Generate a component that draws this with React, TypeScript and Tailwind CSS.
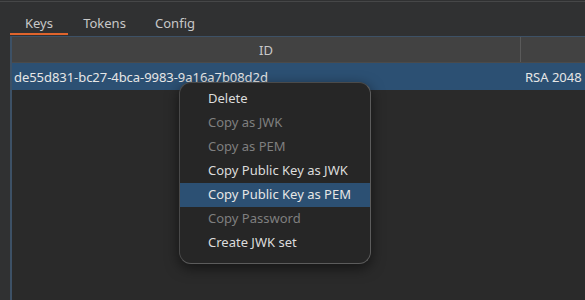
const items = [
  { label: "Delete", disabled: false },
  { label: "Copy as JWK", disabled: true },
  { label: "Copy as PEM", disabled: true },
  { label: "Copy Public Key as JWK", disabled: false },
  { label: "Copy Public Key as PEM", disabled: false, active: true },
  { label: "Copy Password", disabled: true },
  { label: "Create JWK set", disabled: false },
]

export default function App() {
  return (
    <div
      className="relative h-[300px] w-[585px] overflow-hidden bg-[#303132] text-[13px] text-[#dcdcdc]"
      style={{ fontFamily: '"Noto Sans", sans-serif' }}
    >
      <div className="mt-px h-px bg-[#464748]" />
      <div className="flex h-[33px] items-end pl-[10px]">
        <div className="flex h-[24px] w-[58px] items-center justify-center border-b-2 border-[#e0642c] pt-[3px] text-[#c8c8c8]">
          Keys
        </div>
        <div className="flex h-[24px] w-[73px] items-center justify-center border-b-2 border-transparent pt-[3px] text-[#c8c8c8]">
          Tokens
        </div>
        <div className="flex h-[24px] w-[68px] items-center justify-center border-b-2 border-transparent pt-[3px] text-[#c8c8c8]">
          Config
        </div>
      </div>
      <div className="ml-[10px] mt-px h-[264px] border-l-2 border-t border-[#3d5166] bg-[#2a2a2a]">
        <div className="flex h-[26px] border-b border-[#4a4a4a] bg-[#424242] text-[#c8c8c8]">
          <div className="flex w-[509px] items-center justify-center border-r border-[#5a5a5a] pt-[2px]">ID</div>
          <div className="flex-1" />
        </div>
        <div className="flex h-[27px] items-center bg-[#2c5073] pt-[2px] text-[#e6e6e6]">
          <div className="w-[509px] pl-[2px] tracking-[-0.05px]">de55d831-bc27-4bca-9983-9a16a7b08d2d</div>
          <div className="pl-[4px]">RSA 2048</div>
        </div>
      </div>

      <div className="absolute left-[179px] top-[82px] w-[192px] rounded-[12px] border border-[#4a4a4a] border-b-[#5c5c5c] border-r-[#5c5c5c] bg-[#262626] pb-2 pt-1 shadow-[0_4px_14px_rgba(0,0,0,0.55)]">
        {items.map((it) => (
          <div
            key={it.label}
            className={
              "flex h-6 items-center pl-[28px] " +
              (it.active ? "bg-[#2c5073] text-[#e6e6e6] " : "") +
              (it.disabled ? "text-[#7f7f7f]" : "text-[#dcdcdc]")
            }
          >
            {it.label}
          </div>
        ))}
      </div>
    </div>
  )
}
